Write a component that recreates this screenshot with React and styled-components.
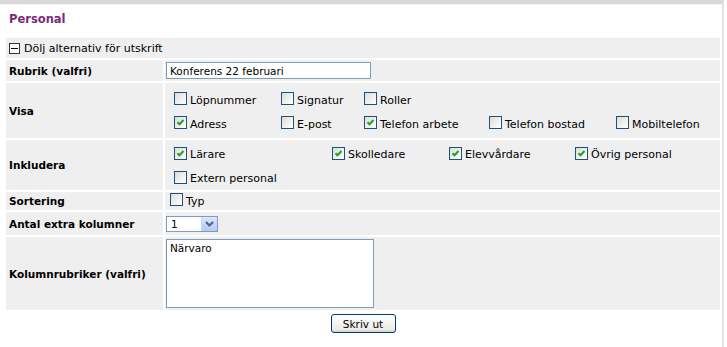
import React, {useState} from 'react';
import styled, {createGlobalStyle} from 'styled-components';

const Global = createGlobalStyle`
  body { margin: 0; background: #fff; font-family: "DejaVu Sans", Verdana, sans-serif; font-size: 11px; color: #000; }
`

const Page = styled.div`
  width: 724px;
  height: 347px;
  border-right: 2px solid #e4e4e4;
  border-top: 4px solid #d9d9d9;
  box-sizing: border-box;
`
const Title = styled.h1`
  margin: 0;
  padding: 7px 0 0 9px;
  height: 27px;
  box-sizing: border-box;
  font-size: 11.5px;
  font-weight: bold;
  color: #7a2a7d;
  border-top: 1px solid #f4f4f4;
`
const Form = styled.div`
  display: grid;
  grid-template-columns: 157px 555px;
  gap: 2px;
  margin: 7px 0 0 6px;
`
const Cell = styled.div`
  background: #efefef;
  display: flex;
  align-items: center;
  min-height: ${p => p.h || 20}px;
  padding-left: ${p => p.pl ?? 3}px;
  box-sizing: border-box;
  grid-column: ${p => p.span ? '1 / -1' : 'auto'};
`
const Label = styled(Cell)`
  font-weight: bold;
  font-size: 10.5px;
`
const Toggle = styled.span`
  display: inline-flex;
  align-items: center;
  gap: 4px;
  font-size: 11px;
`
const MinusBox = styled.span`
  width: 9px;
  height: 9px;
  border: 1px solid #333;
  background: #fff;
  position: relative;
  &::after {
    content: '';
    position: absolute;
    left: 1px;
    right: 1px;
    top: 4px;
    height: 1px;
    background: #000;
  }
`
const TextInput = styled.input`
  width: 205px;
  height: 17px;
  box-sizing: border-box;
  border: 1px solid #7f9db9;
  padding: 0 3px;
  font-family: "DejaVu Sans", Verdana, sans-serif;
  font-size: 10.5px;
  outline: none;
`
const Options = styled.div`
  display: grid;
  grid-template-columns: ${p => p.cols};
  row-gap: 11px;
  padding: 6px 0 3px 9px;
`
const Opt = styled.label`
  display: flex;
  align-items: center;
  gap: 3px;
  font-size: 11px;
  white-space: nowrap;
`
const Box = styled.span`
  width: 13px;
  height: 13px;
  flex: none;
  box-sizing: border-box;
  border: 1px solid #1c5180;
  background: linear-gradient(135deg, #dcdcd7 0%, #f5f5f3 70%, #fff 100%);
  display: inline-flex;
  align-items: center;
  justify-content: center;
  margin-top: -3px;
`
const Select = styled.div`
  width: 52px;
  height: 16px;
  box-sizing: border-box;
  border: 1px solid #7f9db9;
  background: #fff;
  display: flex;
  align-items: center;
  justify-content: space-between;
  padding-left: 4px;
  font-size: 10.5px;
`
const DropBtn = styled.span`
  width: 15px;
  height: 14px;
  background: linear-gradient(#dbe6fc, #b5c9f5);
  border-left: 1px solid #c3d3fd;
  display: flex;
  align-items: center;
  justify-content: center;
`
const Area = styled.textarea`
  width: 208px;
  height: 69px;
  box-sizing: border-box;
  border: 1px solid #7f9db9;
  resize: none;
  padding: 2px 3px;
  font-family: "DejaVu Sans", Verdana, sans-serif;
  font-size: 10.5px;
  outline: none;
`
const Footer = styled.div`
  display: flex;
  justify-content: center;
  padding: 4px 0 0 6px;
  width: 714px;
`
const Button = styled.button`
  width: 65px;
  height: 19px;
  border: 1px solid #003c74;
  border-radius: 3px;
  background: linear-gradient(#fff, #ecebe6 85%, #d6d0c5);
  font-family: "DejaVu Sans", Verdana, sans-serif;
  font-size: 10.5px;
  padding: 0;
`

function Check({on, children}) {
  return (
    <Opt>
      <Box>
        {on && (
          <svg width="9" height="9" viewBox="0 0 9 9">
            <path d="M1.5 4.2 L3.5 6.3 L7.5 2" fill="none" stroke="#21a121" strokeWidth="2" />
          </svg>
        )}
      </Box>
      {children}
    </Opt>
  )
}

export default function App() {
  const [title, setTitle] = useState('Konferens 22 februari')
  const [cols, setCols] = useState('Närvaro')
  return (
    <Page>
      <Global />
      <Title>Personal</Title>
      <Form>
        <Cell span h={20} pl={3}>
          <Toggle><MinusBox />Dölj alternativ för utskrift</Toggle>
        </Cell>
        <Label h={21}>Rubrik (valfri)</Label>
        <Cell h={21} pl={1}>
          <TextInput value={title} onChange={e => setTitle(e.target.value)} />
        </Cell>
        <Label h={55}>Visa</Label>
        <Cell pl={0}>
          <Options cols="107px 83px 125px 127px 1fr">
            <Check>Löpnummer</Check>
            <Check>Signatur</Check>
            <Check>Roller</Check>
            <span />
            <span />
            <Check on>Adress</Check>
            <Check>E-post</Check>
            <Check on>Telefon arbete</Check>
            <Check>Telefon bostad</Check>
            <Check>Mobiltelefon</Check>
          </Options>
        </Cell>
        <Label h={50}>Inkludera</Label>
        <Cell pl={0}>
          <Options cols="158px 117px 126px 1fr">
            <Check on>Lärare</Check>
            <Check on>Skolledare</Check>
            <Check on>Elevvårdare</Check>
            <Check on>Övrig personal</Check>
            <Check>Extern personal</Check>
          </Options>
        </Cell>
        <Label h={18}>Sortering</Label>
        <Cell h={18} pl={5}>
          <Check>Typ</Check>
        </Cell>
        <Label h={23}>Antal extra kolumner</Label>
        <Cell h={23} pl={1}>
          <Select>
            1
            <DropBtn>
              <svg width="9" height="6" viewBox="0 0 9 6">
                <path d="M1 1 L4.5 4.5 L8 1" fill="none" stroke="#4d6185" strokeWidth="2" />
              </svg>
            </DropBtn>
          </Select>
        </Cell>
        <Label h={73}>Kolumnrubriker (valfri)</Label>
        <Cell h={73} pl={1}>
          <Area value={cols} onChange={e => setCols(e.target.value)} />
        </Cell>
      </Form>
      <Footer>
        <Button>Skriv ut</Button>
      </Footer>
    </Page>
  )
}
